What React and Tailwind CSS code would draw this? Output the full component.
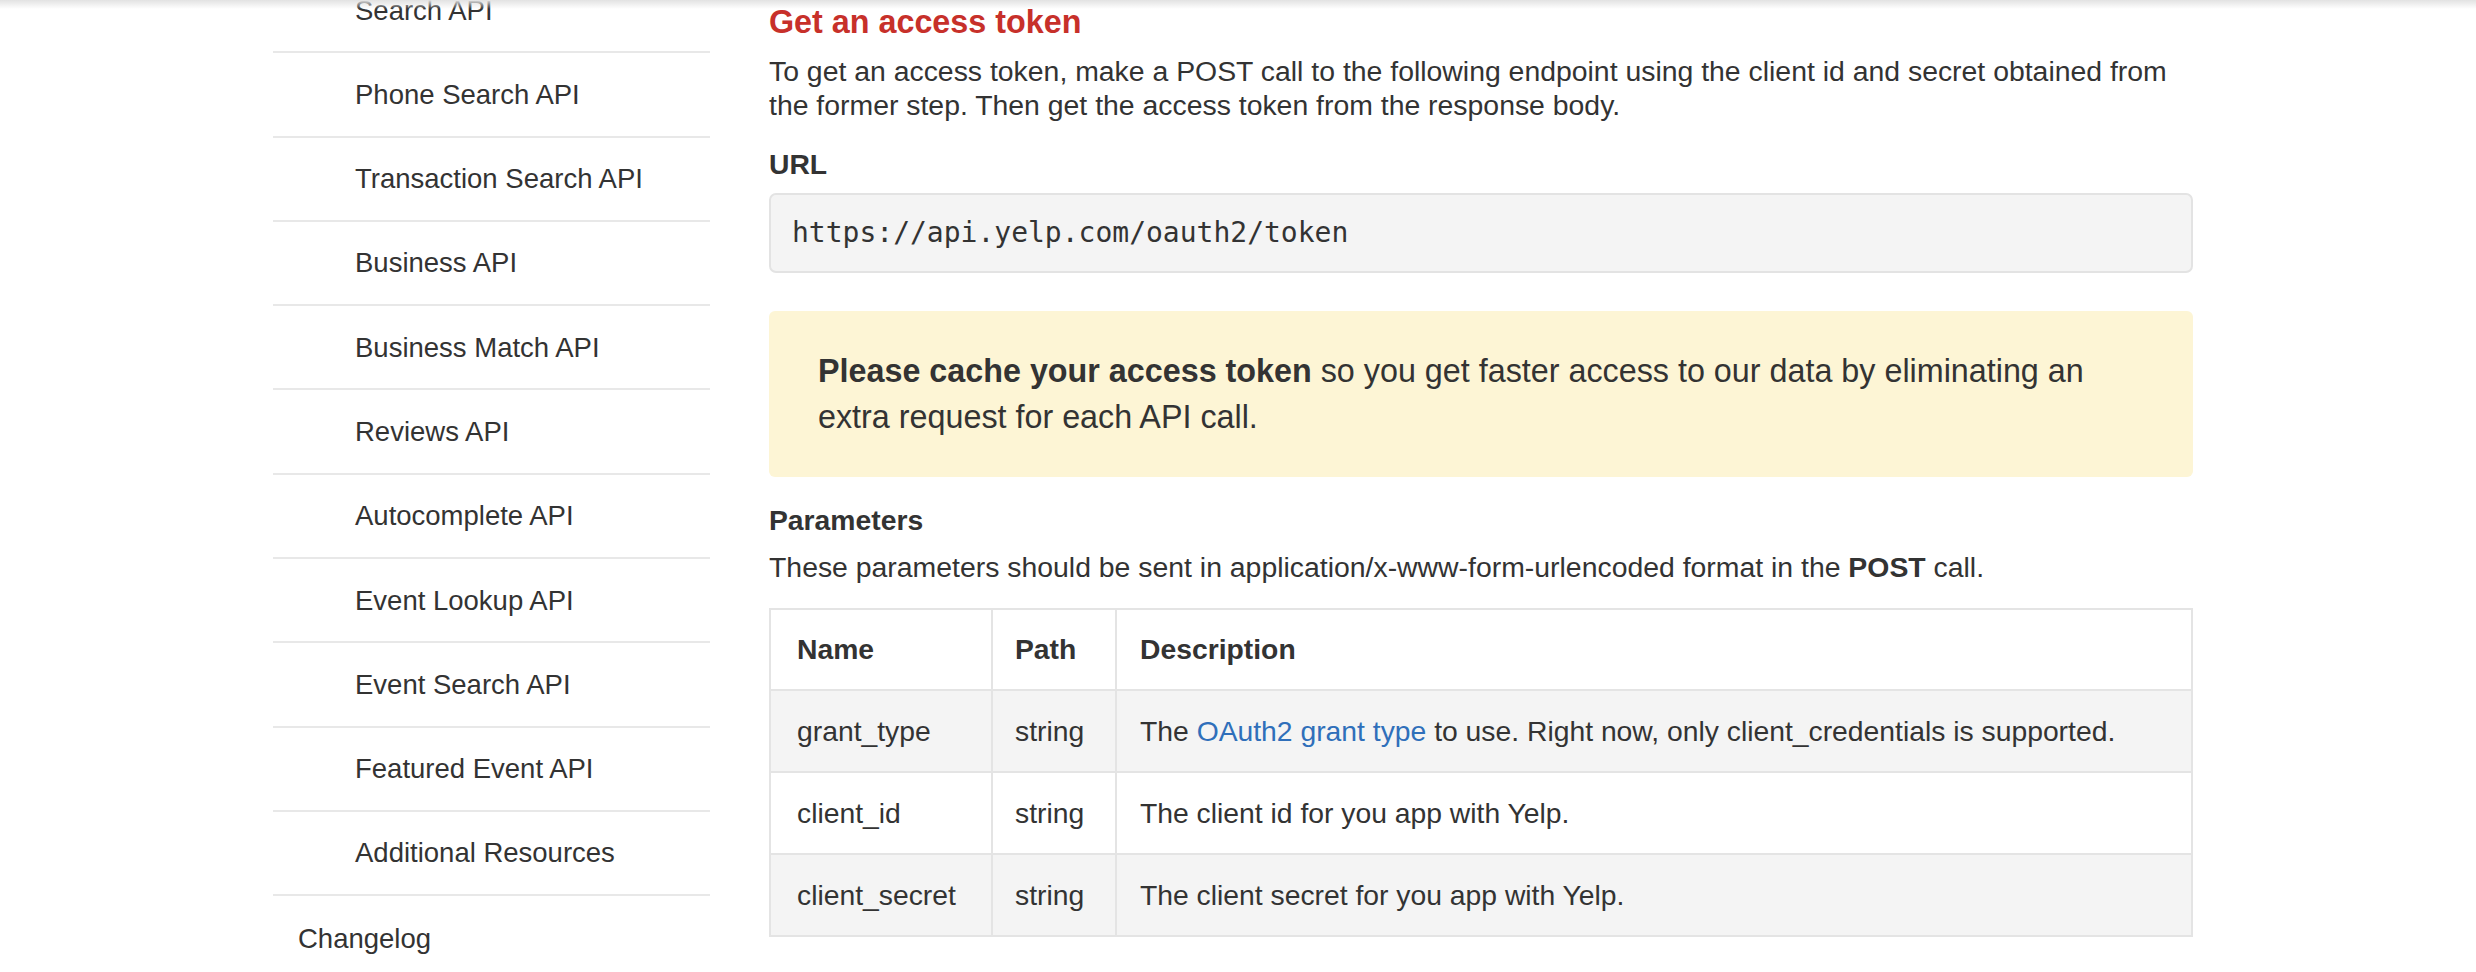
export default function App() {
  const nav = [
    "Search API",
    "Phone Search API",
    "Transaction Search API",
    "Business API",
    "Business Match API",
    "Reviews API",
    "Autocomplete API",
    "Event Lookup API",
    "Event Search API",
    "Featured Event API",
    "Additional Resources",
  ];
  return (
    <div className="relative h-[972px] w-full overflow-hidden bg-white text-[#333] font-['Liberation_Sans',Arial,sans-serif]">
      <div className="pointer-events-none absolute inset-x-0 top-0 z-10 h-[9px] bg-linear-to-b from-[#e2e2e2] to-white/0" />
      <div className="flex">
        <nav className="ml-[273px] mt-[-31px] w-[437px] shrink-0">
          {nav.map((n) => (
            <div
              key={n}
              className="flex h-[84.3px] items-center border-b-2 border-[#e8e8e8] pl-[82px] text-[27.5px]"
            >
              {n}
            </div>
          ))}
          <div className="flex h-[84px] items-center pl-[25px] text-[27.5px]">Changelog</div>
        </nav>
        <main className="ml-[59px] w-[1424px] shrink-0 pt-[2px]">
          <h2 className="text-[32.3px] font-bold leading-[40px] text-[#c7302a]">Get an access token</h2>
          <p className="mt-[12px] text-[28.4px] leading-[34px]">
            To get an access token, make a POST call to the following endpoint using the client id and secret obtained from the former step. Then get the access token from the response body.
          </p>
          <h4 className="mt-[25px] text-[28.3px] font-bold leading-[34px]">URL</h4>
          <div className="mt-[12px] flex h-[80px] items-center rounded-[7px] border-2 border-[#e3e3e3] bg-[#f4f4f4] pl-[21px] font-['DejaVu_Sans_Mono',monospace] text-[28px]">
            https://api.yelp.com/oauth2/token
          </div>
          <div className="mt-[38px] rounded-[6px] bg-[#fdf5d5] px-[49px] py-[37px] text-[32.3px] leading-[46px]">
            <b>Please cache your access token</b> so you get faster access to our data by eliminating an extra request for each API call.
          </div>
          <h4 className="mt-[26px] text-[28.3px] font-bold leading-[34px]">Parameters</h4>
          <p className="mt-[13px] text-[28.4px] leading-[34px]">
            These parameters should be sent in application/x-www-form-urlencoded format in the <b>POST</b> call.
          </p>
          <table className="mt-[24px] w-full border-collapse border-2 border-[#e4e4e4] text-[28.3px]">
            <colgroup>
              <col className="w-[222px]" />
              <col className="w-[124px]" />
              <col />
            </colgroup>
            <thead>
              <tr className="bg-white">
                <th className="h-[81px] border-2 border-[#e4e4e4] pl-[26px] text-left font-bold">Name</th>
                <th className="h-[81px] border-2 border-[#e4e4e4] pl-[22px] text-left font-bold">Path</th>
                <th className="h-[81px] border-2 border-[#e4e4e4] pl-[23px] text-left font-bold">Description</th>
              </tr>
            </thead>
            <tbody>
              <tr className="bg-[#f4f4f4]">
                <td className="h-[82px] border-2 border-[#e4e4e4] pl-[26px]">grant_type</td>
                <td className="h-[82px] border-2 border-[#e4e4e4] pl-[22px]">string</td>
                <td className="h-[82px] border-2 border-[#e4e4e4] pl-[23px]">
                  The <a className="text-[#2f6fba]">OAuth2 grant type</a> to use. Right now, only client_credentials is supported.
                </td>
              </tr>
              <tr className="bg-white">
                <td className="h-[82px] border-2 border-[#e4e4e4] pl-[26px]">client_id</td>
                <td className="h-[82px] border-2 border-[#e4e4e4] pl-[22px]">string</td>
                <td className="h-[82px] border-2 border-[#e4e4e4] pl-[23px]">The client id for you app with Yelp.</td>
              </tr>
              <tr className="bg-[#f4f4f4]">
                <td className="h-[82px] border-2 border-[#e4e4e4] pl-[26px]">client_secret</td>
                <td className="h-[82px] border-2 border-[#e4e4e4] pl-[22px]">string</td>
                <td className="h-[82px] border-2 border-[#e4e4e4] pl-[23px]">The client secret for you app with Yelp.</td>
              </tr>
            </tbody>
          </table>
        </main>
      </div>
    </div>
  );
}
